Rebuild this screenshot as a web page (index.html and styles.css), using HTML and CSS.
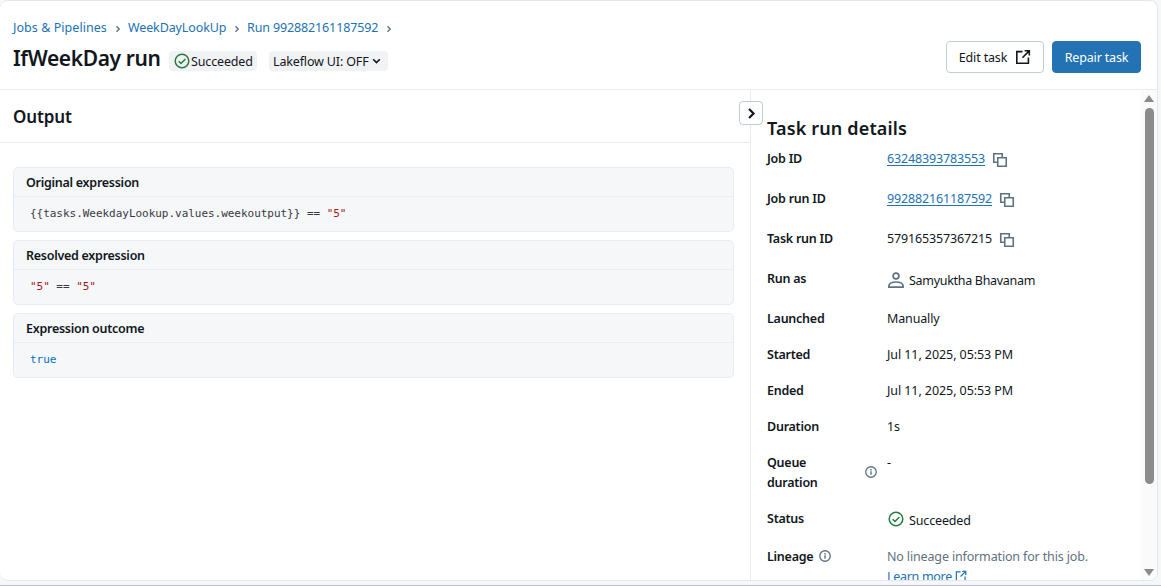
FILE: index.html
```html
<!DOCTYPE html>
<html lang="en">
<head>
<meta charset="utf-8">
<title>IfWeekDay run</title>
<link rel="stylesheet" href="styles.css">
</head>
<body>
<svg width="0" height="0" class="defs">
  <symbol id="check" viewBox="0 0 16 16"><circle cx="8" cy="8" r="6.8" fill="none" stroke="currentColor" stroke-width="1.5"/><path d="M4.7 8.2 7 10.4l4.4-4.5" fill="none" stroke="currentColor" stroke-width="1.5"/></symbol>
  <symbol id="copy" viewBox="0 0 16 16"><path d="M5 10.250H1.750V1.750h8.500V5M5.750 5.750h8.500v8.500H5.750z" fill="none" stroke="currentColor" stroke-width="1.6"/></symbol>
  <symbol id="info" viewBox="0 0 16 16"><circle cx="8" cy="8" r="7" fill="none" stroke="currentColor" stroke-width="1.8"/><path d="M8 7v4.800M8 4v2" stroke="currentColor" stroke-width="1.9"/></symbol>
  <symbol id="external" viewBox="0 0 16 16"><path d="M7.500 2.600H1.800v11.600h11.600V8.500M9.600 1.800h4.700v4.700M14.200 1.900 7.400 8.700" fill="none" stroke="currentColor" stroke-width="1.6"/></symbol>
  <symbol id="chevron" viewBox="0 0 16 16"><path d="m5 2.500 5.500 5.500L5 13.500" fill="none" stroke="currentColor" stroke-width="2.700"/></symbol>
</svg>
<div class="panel">
  <header class="header">
    <div class="heading">
      <nav class="crumbs">
        <a class="c1">Jobs &amp; Pipelines</a><svg class="sep"><use href="#chevron"/></svg>
        <a class="c2">WeekDayLookUp</a><svg class="sep"><use href="#chevron"/></svg>
        <a class="c3">Run 992882161187592</a><svg class="sep"><use href="#chevron"/></svg>
      </nav>
      <div class="title-row">
        <h1>IfWeekDay run</h1>
        <span class="tag tag-status"><svg class="ok"><use href="#check"/></svg><span>Succeeded</span></span>
        <span class="tag tag-ui"><span>Lakeflow UI: OFF</span><svg class="down" viewBox="0 0 10 10"><path d="m1.3 3 3.7 3.700L8.700 3" fill="none" stroke="currentColor" stroke-width="1.8"/></svg></span>
      </div>
    </div>
    <div class="actions">
      <button class="btn edit"><span>Edit task</span><svg><use href="#external"/></svg></button>
      <button class="btn primary"><span>Repair task</span></button>
    </div>
  </header>
  <div class="content">
    <main class="output">
      <h2>Output</h2>
      <div class="cards">
        <section class="card"><h3>Original expression</h3><code>{{tasks.WeekdayLookup.values.weekoutput}} == <span class="str">"5"</span></code></section>
        <section class="card"><h3>Resolved expression</h3><code><span class="str">"5"</span> == <span class="str">"5"</span></code></section>
        <section class="card"><h3>Expression outcome</h3><code><span class="bool">true</span></code></section>
      </div>
    </main>
    <aside class="details">
      <button class="collapse"><svg><use href="#chevron"/></svg></button>
      <div class="details-body">
        <h2>Task run details</h2>
        <dl>
          <div class="row tall"><dt>Job ID</dt><dd><a>63248393783553</a><svg class="copy"><use href="#copy"/></svg></dd></div>
          <div class="row tall"><dt>Job run ID</dt><dd><a>992882161187592</a><svg class="copy"><use href="#copy"/></svg></dd></div>
          <div class="row tall"><dt>Task run ID</dt><dd><span>579165357367215</span><svg class="copy"><use href="#copy"/></svg></dd></div>
          <div class="row tall"><dt>Run as</dt><dd class="iconed person"><svg class="user" viewBox="0 0 16 16"><g fill="none" stroke="currentColor" stroke-width="1.7"><circle cx="8" cy="4" r="2.900"/><path d="M.9 15.100v-1.300C1.200 11.400 4.200 10 8 10s6.800 1.400 7.100 3.800v1.300z"/></g></svg><span>Samyuktha Bhavanam</span></dd></div>
          <div class="row"><dt>Launched</dt><dd>Manually</dd></div>
          <div class="row"><dt>Started</dt><dd class="date">Jul 11, 2025, 05:53 PM</dd></div>
          <div class="row"><dt>Ended</dt><dd class="date">Jul 11, 2025, 05:53 PM</dd></div>
          <div class="row"><dt>Duration</dt><dd>1s</dd></div>
          <div class="row"><dt class="queue"><span>Queue duration</span><svg class="info"><use href="#info"/></svg></dt><dd>-</dd></div>
          <div class="row status"><dt>Status</dt><dd class="iconed"><svg class="ok"><use href="#check"/></svg><span>Succeeded</span></dd></div>
          <div class="row"><dt class="lineage"><span>Lineage</span><svg class="info"><use href="#info"/></svg></dt><dd class="muted">No lineage information for this job.<br><a class="learn">Learn more <svg><use href="#external"/></svg></a></dd></div>
        </dl>
      </div>
      <div class="scrollbar"><i class="up"></i><i class="thumb"></i><i class="dn"></i></div>
    </aside>
  </div>
</div>
</body>
</html>
```

FILE: styles.css
```css
* { box-sizing: border-box; }
body {
  margin: 0; height: 586px; overflow: hidden;
  background: #f6f7f9; border-bottom: 1px solid #b4bfc3;
  font: 12.5px/20px "Noto Sans", "Open Sans", sans-serif;
  letter-spacing: -.15px; color: #11171c;
}
svg { display: block; flex: none; }
.defs { position: absolute; }
h1, h2, h3, dl, dd { margin: 0; }
a { color: #2272b4; }
button { font: inherit; letter-spacing: inherit; color: inherit; margin: 0; }
.panel {
  width: 1158px; height: 581px; overflow: hidden; background: #fff;
  border: 1px solid #e4e8ee; border-left: 0; border-radius: 8px;
  display: flex; flex-direction: column;
}
.header {
  height: 89px; flex: none; display: flex; justify-content: space-between;
  border-bottom: 1px solid #e8ebf0; padding: 17px 16px 0 13px;
}
.crumbs { display: flex; align-items: center; height: 20px; margin-bottom: 5px; white-space: nowrap; }
.c1 { width: 94px; letter-spacing: .05px; }
.c2 { width: 98px; letter-spacing: -.12px; }
.c3 { width: 131px; letter-spacing: -.13px; }
.sep { width: 8px; height: 8px; margin: 2px 6px 0 7px; color: #5f7281; }
.title-row { display: flex; align-items: center; height: 32px; }
h1 { font-size: 21px; line-height: 28px; font-weight: 600; width: 156px; white-space: nowrap; letter-spacing: -.4px; padding-bottom: 2px; }
.tag { display: flex; align-items: center; height: 20px; margin-top: 4px; background: #f1f2f4; border-radius: 4px; white-space: nowrap; }
.tag span, .btn span { padding-top: 2px; }
.tag-status { width: 88px; padding-left: 5px; margin-right: 12px; gap: 1px; }
.tag-ui { width: 119px; padding-left: 4px; gap: 3px; }
.down { width: 9px; height: 10px; }
.ok { width: 16px; height: 16px; color: #277c43; }
.actions { display: flex; gap: 8px; padding-top: 23px; }
.btn { height: 32px; border-radius: 4px; border: 1px solid #c0cdd8; background: #fff; padding: 0; display: flex; align-items: center; justify-content: center; }
.edit { width: 98px; gap: 8px; }
.edit svg { width: 16px; height: 16px; }
.primary { width: 89px; background: #2272b4; border-color: #2272b4; color: #fff; }
.content { flex: 1; min-height: 0; display: flex; }
.output { width: 750px; }
h2 { font-size: 17px; font-weight: 600; line-height: 24px; letter-spacing: -.1px; }
.output h2 { height: 53px; padding: 15px 13px 0; border-bottom: 1px solid #e8ebf0; }
.cards { padding: 24px 16px 0 13px; display: flex; flex-direction: column; gap: 8px; }
.card { height: 65px; border: 1px solid #e8ebf0; border-radius: 5px; background: #f6f7f9; }
h3 { font-size: 12.5px; font-weight: 600; letter-spacing: -.27px; line-height: 20px; height: 29px; padding: 5px 12px 0; border-bottom: 1px solid #e8ebf0; }
code { display: block; padding: 7px 16px 0; font: 11px/20px "DejaVu Sans Mono", monospace; letter-spacing: -.03px; color: #383a42; white-space: pre; }
.str { color: #a31515; }
.bool { color: #0070c1; }
.details { flex: 1; min-width: 0; position: relative; border-left: 1px solid #e8ebf0; display: flex; justify-content: space-between; }
.collapse { position: absolute; left: -12px; top: 11px; width: 24px; height: 24px; padding: 0 0 0 1px; display: grid; place-items: center; background: #fff; border: 1px solid #c0cdd8; border-radius: 4px; }
.collapse svg { width: 13px; height: 13px; }
.details-body { width: 374px; padding: 26px 0 0 16px; overflow: hidden; }
.details h2 { margin-bottom: 9px; font-size: 18px; letter-spacing: .15px; }
dl { display: flex; flex-direction: column; gap: 16px; }
.row { display: grid; grid-template-columns: 112px 1fr; column-gap: 8px; min-height: 20px; align-items: start; }
.row.tall { height: 24px; }
.row.status { height: 22px; }
dt { font-weight: 600; letter-spacing: -.25px; }
dd { display: flex; white-space: nowrap; }
.row dd a { text-decoration: underline; text-underline-offset: 2px; }
.copy { width: 16px; height: 16px; margin: 3px 0 0 7px; color: #5f7281; }
.iconed { gap: 5px; padding-left: 1px; }
.iconed span { padding-top: 2px; }
.iconed svg { margin-top: 2px; }
.person { letter-spacing: -.3px; }
.iconed .user { margin-top: 3px; }
.date { letter-spacing: -.08px; }
.user { width: 16px; height: 16px; color: #5f7281; }
.info { width: 12px; height: 12px; color: #5f7281; }
.queue { display: flex; align-items: center; justify-content: space-between; padding-right: 2px; }
.queue svg { margin-top: -2px; }
.queue span { width: 60px; }
.lineage { display: flex; align-items: center; gap: 6px; }
.lineage svg { margin-top: -2px; }
dd.muted { display: block; color: #5f7281; }
.row dd a.learn { display: flex; align-items: center; gap: 3px; letter-spacing: -.3px; text-decoration: none; }
.learn svg { width: 12px; height: 12px; margin-top: -3px; }
.scrollbar { width: 16px; background: #fafafa; display: flex; flex-direction: column; align-items: center; padding: 5px 0 4px; }
.up { border: 5px solid transparent; border-top: 0; border-bottom: 7px solid #8b8b8b; }
.thumb { width: 9px; height: 376px; margin-top: 6px; border-radius: 5px; background: #8b8b8b; }
.dn { margin-top: auto; border: 5px solid transparent; border-bottom: 0; border-top: 7px solid #8b8b8b; }
```
